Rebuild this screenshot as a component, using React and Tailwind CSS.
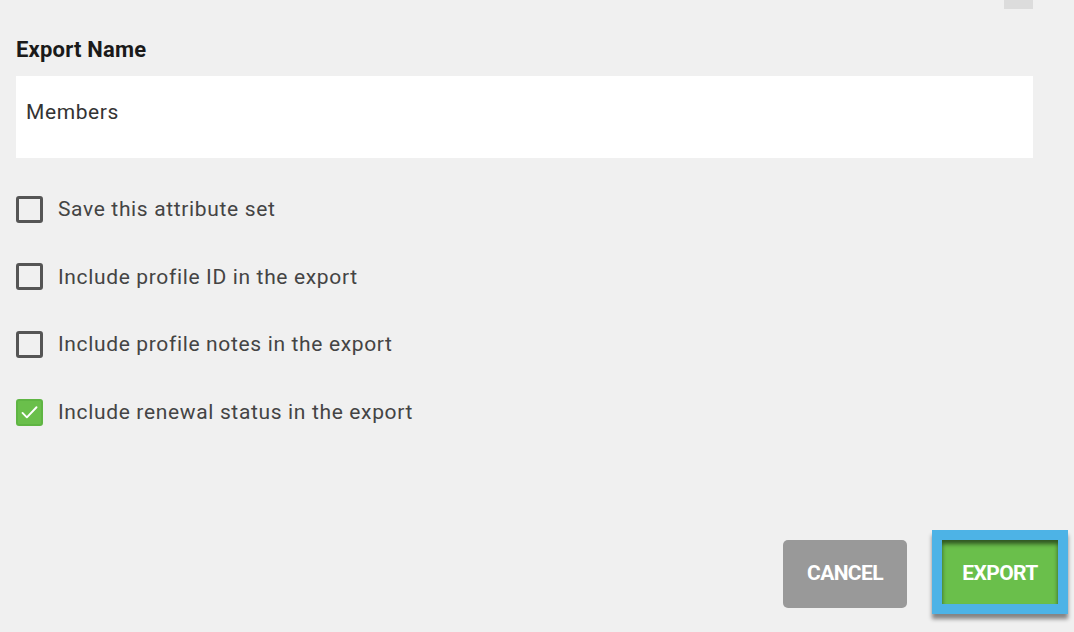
import { useState } from 'react';

const options = [
  { id: 'save', label: 'Save this attribute set', checked: false },
  { id: 'pid', label: 'Include profile ID in the export', checked: false },
  { id: 'notes', label: 'Include profile notes in the export', checked: false },
  { id: 'renewal', label: 'Include renewal status in the export', checked: true },
];

function Checkbox({ checked, onChange, label }) {
  return (
    <label className="flex items-center h-[28px] cursor-pointer">
      <span
        onClick={onChange}
        className={
          checked
            ? 'w-[27px] h-[27px] rounded-[3px] bg-[#6abf4b] border-[2px] border-[#5fb543] flex items-center justify-center shrink-0'
            : 'w-[27px] h-[27px] rounded-[3px] border-[3px] border-[#555] bg-transparent shrink-0'
        }
      >
        {checked && (
          <svg viewBox="0 0 24 24" className="w-[21px] h-[21px]" fill="none" stroke="white" strokeWidth={2.2} strokeLinecap="round" strokeLinejoin="round">
            <path d="M4 12.5l5 5L20 6" />
          </svg>
        )}
      </span>
      <span className="ml-[15px] text-[21px] leading-[24px] tracking-[0.65px] text-[#444]">{label}</span>
    </label>
  );
}

export default function App() {
  const [state, setState] = useState(options.map((o) => o.checked));
  const [name, setName] = useState('Members');

  return (
    <div className="w-[1074px] h-[632px] overflow-hidden bg-[#f0f0f0] font-['Roboto',sans-serif]">
      <div className="pl-4 pr-[41px]">
        <div className="h-[9px] flex justify-end">
          <div className="w-[29px] h-[9px] bg-[#dcdcdc]" />
        </div>

        <div className="mt-[29px] text-[22px] leading-[24px] font-bold text-[#1a1a1a] tracking-[0.2px]">Export Name</div>

        <div className="mt-[14px] h-[82px] bg-white flex items-center px-[10px]">
          <input
            value={name}
            onChange={(e) => setName(e.target.value)}
            className="w-full bg-transparent outline-none text-[21px] tracking-[0.6px] text-[#333] -mt-[8px]"
          />
        </div>

        <div className="mt-[37px] flex flex-col gap-[39.7px]">
          {options.map((o, i) => (
            <Checkbox
              key={o.id}
              label={o.label}
              checked={state[i]}
              onChange={() => setState((s) => s.map((v, j) => (j === i ? !v : v)))}
            />
          ))}
        </div>
      </div>

      <div className="mt-[104px] flex justify-end items-start pr-[6px]">
        <button className="mt-[10px] w-[124px] h-[68px] rounded-[5px] bg-[#999] text-white font-bold text-[21px] tracking-[-0.6px] uppercase">
          Cancel
        </button>
        <div className="ml-[25px] border-[10px] border-[#4db3e6] shadow-[0_5px_4px_rgba(0,0,0,0.45)]">
          <button className="w-[116px] h-[64px] pt-[4px] bg-[#6abf4b] text-white font-bold text-[21px] tracking-[-0.6px] uppercase shadow-[inset_0_4px_4px_rgba(0,0,0,0.55)]">
            Export
          </button>
        </div>
      </div>
    </div>
  );
}
